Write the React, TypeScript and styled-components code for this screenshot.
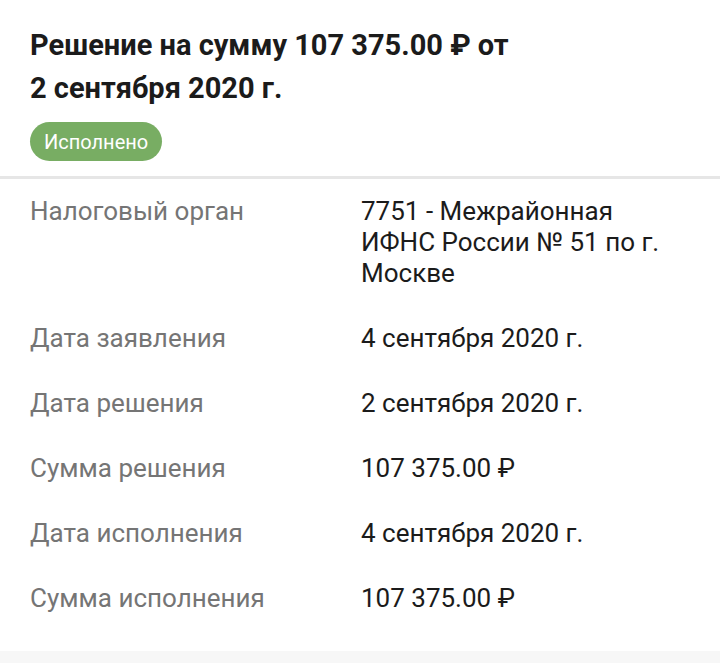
import styled, { createGlobalStyle } from 'styled-components';

const GlobalStyle = createGlobalStyle`
  html, body {
    margin: 0;
    padding: 0;
    background: #f7f7f7;
  }
  body {
    font-family: Roboto, 'Noto Sans', sans-serif;
    -webkit-font-smoothing: antialiased;
  }
`;

const Card = styled.div`
  background: #ffffff;
  width: 720px;
  padding-bottom: 37px;
`;

const Header = styled.header`
  padding: 24px 30px 15px;
  border-bottom: 3px solid #e6e6e6;
`;

const Title = styled.h1`
  margin: 0;
  max-width: 490px;
  font-size: 29px;
  font-weight: 700;
  line-height: 43px;
  color: #1b1b1b;
`;

const Badge = styled.span<{ bg: string }>`
  display: inline-flex;
  align-items: center;
  height: 39px;
  margin-top: 12px;
  padding: 0 14px;
  border-radius: 20px;
  background: ${({ bg }) => bg};
  color: #ffffff;
  font-size: 20px;
`;

const Details = styled.dl`
  margin: 0;
  padding: 17px 30px 0;
  display: grid;
  grid-template-columns: 331px 312px;
  row-gap: 34px;
  font-size: 26px;
  line-height: 31px;
`;

const Label = styled.dt`
  margin: 0;
  color: #757575;
`;

const Value = styled.dd`
  margin: 0;
  color: #1b1b1b;
`;

const rows: [string, string][] = [
  ['Налоговый орган', '7751 - Межрайонная ИФНС России № 51 по г. Москве'],
  ['Дата заявления', '4 сентября 2020 г.'],
  ['Дата решения', '2 сентября 2020 г.'],
  ['Сумма решения', '107 375.00 ₽'],
  ['Дата исполнения', '4 сентября 2020 г.'],
  ['Сумма исполнения', '107 375.00 ₽'],
];

export default function App() {
  return (
    <>
      <GlobalStyle />
      <Card>
        <Header>
          <Title>Решение на сумму 107 375.00 ₽ от 2 сентября 2020 г.</Title>
          <Badge bg="#78ad63">Исполнено</Badge>
        </Header>
        <Details>
          {rows.map(([label, value]) => (
            <>
              <Label key={label + '-l'}>{label}</Label>
              <Value key={label + '-v'}>{value}</Value>
            </>
          ))}
        </Details>
      </Card>
    </>
  );
}
